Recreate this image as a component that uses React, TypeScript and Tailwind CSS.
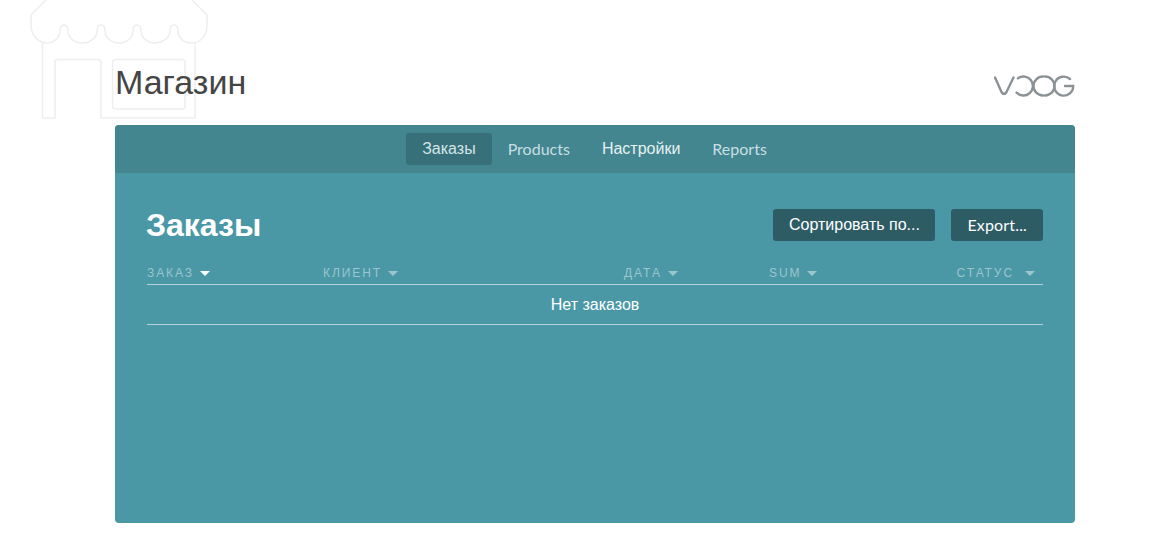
import React from 'react';

const latin = "font-['Lato','Liberation_Sans',sans-serif]";

const StoreIcon = () => (
  <svg className="absolute left-0 top-0" width="210" height="120" viewBox="0 0 210 120" fill="none" stroke="#eeeeee" strokeWidth="1.5">
    <path d="M47 -1 L31 15 V25 C31 36 39 43 47 43 C54 43 60 37 60 31 C60 27 62 25 64 25 C66 25 68 27 68 31 C68 38 75 43 82 43 C90 43 97 38 97 31 C97 27 99 25 101 25 C103 25 105 27 105 31 C105 38 112 43 119 43 C126 43 133 38 133 31 C133 27 135 25 137 25 C139 25 141 27 141 31 C141 38 148 43 155 43 C162 43 170 38 170 31 C170 27 172 25 174 25 C176 25 178 27 178 31 C178 38 184 43 192 43 C200 43 207 36 207 25 V15 L191 -1" />
    <path d="M42.5 43 V118 H55 V62 Q55 59.5 58 59.5 H98 Q101 59.5 101 62 V118 H195 V43" />
    <rect x="112.5" y="59.5" width="72.5" height="49.5" rx="3" />
  </svg>
);

const VoogLogo = () => (
  <svg width="81" height="22" viewBox="0 0 81 22" fill="none" stroke="#8b9296" strokeWidth="2.4" strokeLinecap="round">
    <path d="M1 2.5 L7.5 17 Q10 21 12.5 17 L19.5 2.5" />
    <path d="M24 3.2 A9.5 9.5 0 1 1 22.5 17.5" />
    <path d="M49 1.5 A9.5 9.5 0 0 0 49 20.5" />
    <path d="M51 20.5 A9.5 9.5 0 0 0 51 1.5" />
    <path d="M76 4 A9.5 9.5 0 1 0 79.2 11 H71" />
  </svg>
);

const Caret = ({ light = false }: { light?: boolean }) => (
  <span className={`inline-block w-0 h-0 border-x-[5px] border-x-transparent border-t-[5px] ${light ? 'border-t-white' : 'border-t-[#9cc5cc]'}`} />
);

const NavItem = ({ label, active = false, bright = false, ru = false }: { label: string; active?: boolean; bright?: boolean; ru?: boolean }) => (
  <a className={`h-8 px-4 flex items-center rounded-[3px] text-[16px] ${ru ? "font-['Liberation_Sans',sans-serif]" : `${latin} pb-px`} ${active ? 'bg-[#38707a] text-[#d5e6e9]' : bright ? 'text-[#e6f1f2]' : 'text-[#c7dfe3]'}`}>
    {label}
  </a>
);

const ActionButton = ({ label, ru = false }: { label: string; ru?: boolean }) => (
  <button className={`h-8 rounded-[3px] bg-[#2d5c65] text-white text-[16px] ${ru ? "px-[15.5px] font-['Liberation_Sans',sans-serif]" : `px-4 ${latin} tracking-[0.01em]`}`}>
    {label}
  </button>
);

const HeaderCell = ({ label, active = false, gap = 'gap-[6px]', className = '' }: { label: string; active?: boolean; gap?: string; className?: string }) => (
  <div className={`flex items-center ${gap} ${className}`}>
    <span className="text-[12px] tracking-[0.16em] text-[#9cc5cc]">{label}</span>
    <Caret light={active} />
  </div>
);

export default function App() {
  return (
    <div className="relative h-[557px] bg-white overflow-hidden font-['Liberation_Sans',sans-serif]">
      <StoreIcon />
      <div className="relative w-[960px] ml-[115px]">
        <header className="h-[125px] flex items-start justify-between">
          <h1 className="mt-[63px] text-[34px] leading-[38px] text-[#454545]">Магазин</h1>
          <div className="mt-[75px]">
            <VoogLogo />
          </div>
        </header>

        <main className="h-[398px] rounded-[4px] overflow-hidden bg-[#4a98a6]">
          <nav className="h-12 bg-[#43868f] flex items-center justify-center pr-[1px]">
            <NavItem label="Заказы" active ru />
            <NavItem label="Products" />
            <NavItem label="Настройки" bright ru />
            <NavItem label="Reports" />
          </nav>

          <section className="px-8 pt-9">
            <div className="flex items-center justify-between h-8">
              <h2 className="text-[32px] font-bold text-white -ml-px">Заказы</h2>
              <div className="flex gap-4">
                <ActionButton label="Сортировать по..." ru />
                <ActionButton label="Export..." />
              </div>
            </div>

            <div className="mt-[22px] h-5 grid grid-cols-[176px_301px_145px_1fr_auto] items-center border-b border-[#b5d5da] box-content pb-[1px]">
              <HeaderCell label="ЗАКАЗ" active />
              <HeaderCell label="КЛИЕНТ" />
              <HeaderCell label="ДАТА" />
              <HeaderCell label="SUM" />
              <HeaderCell label="СТАТУС" gap="gap-[11px]" className="pr-[8px]" />
            </div>
            <div className="h-10 flex items-center justify-center border-b border-[#b5d5da] text-white text-[16px]">
              Нет заказов
            </div>
          </section>
        </main>
      </div>
    </div>
  );
}
